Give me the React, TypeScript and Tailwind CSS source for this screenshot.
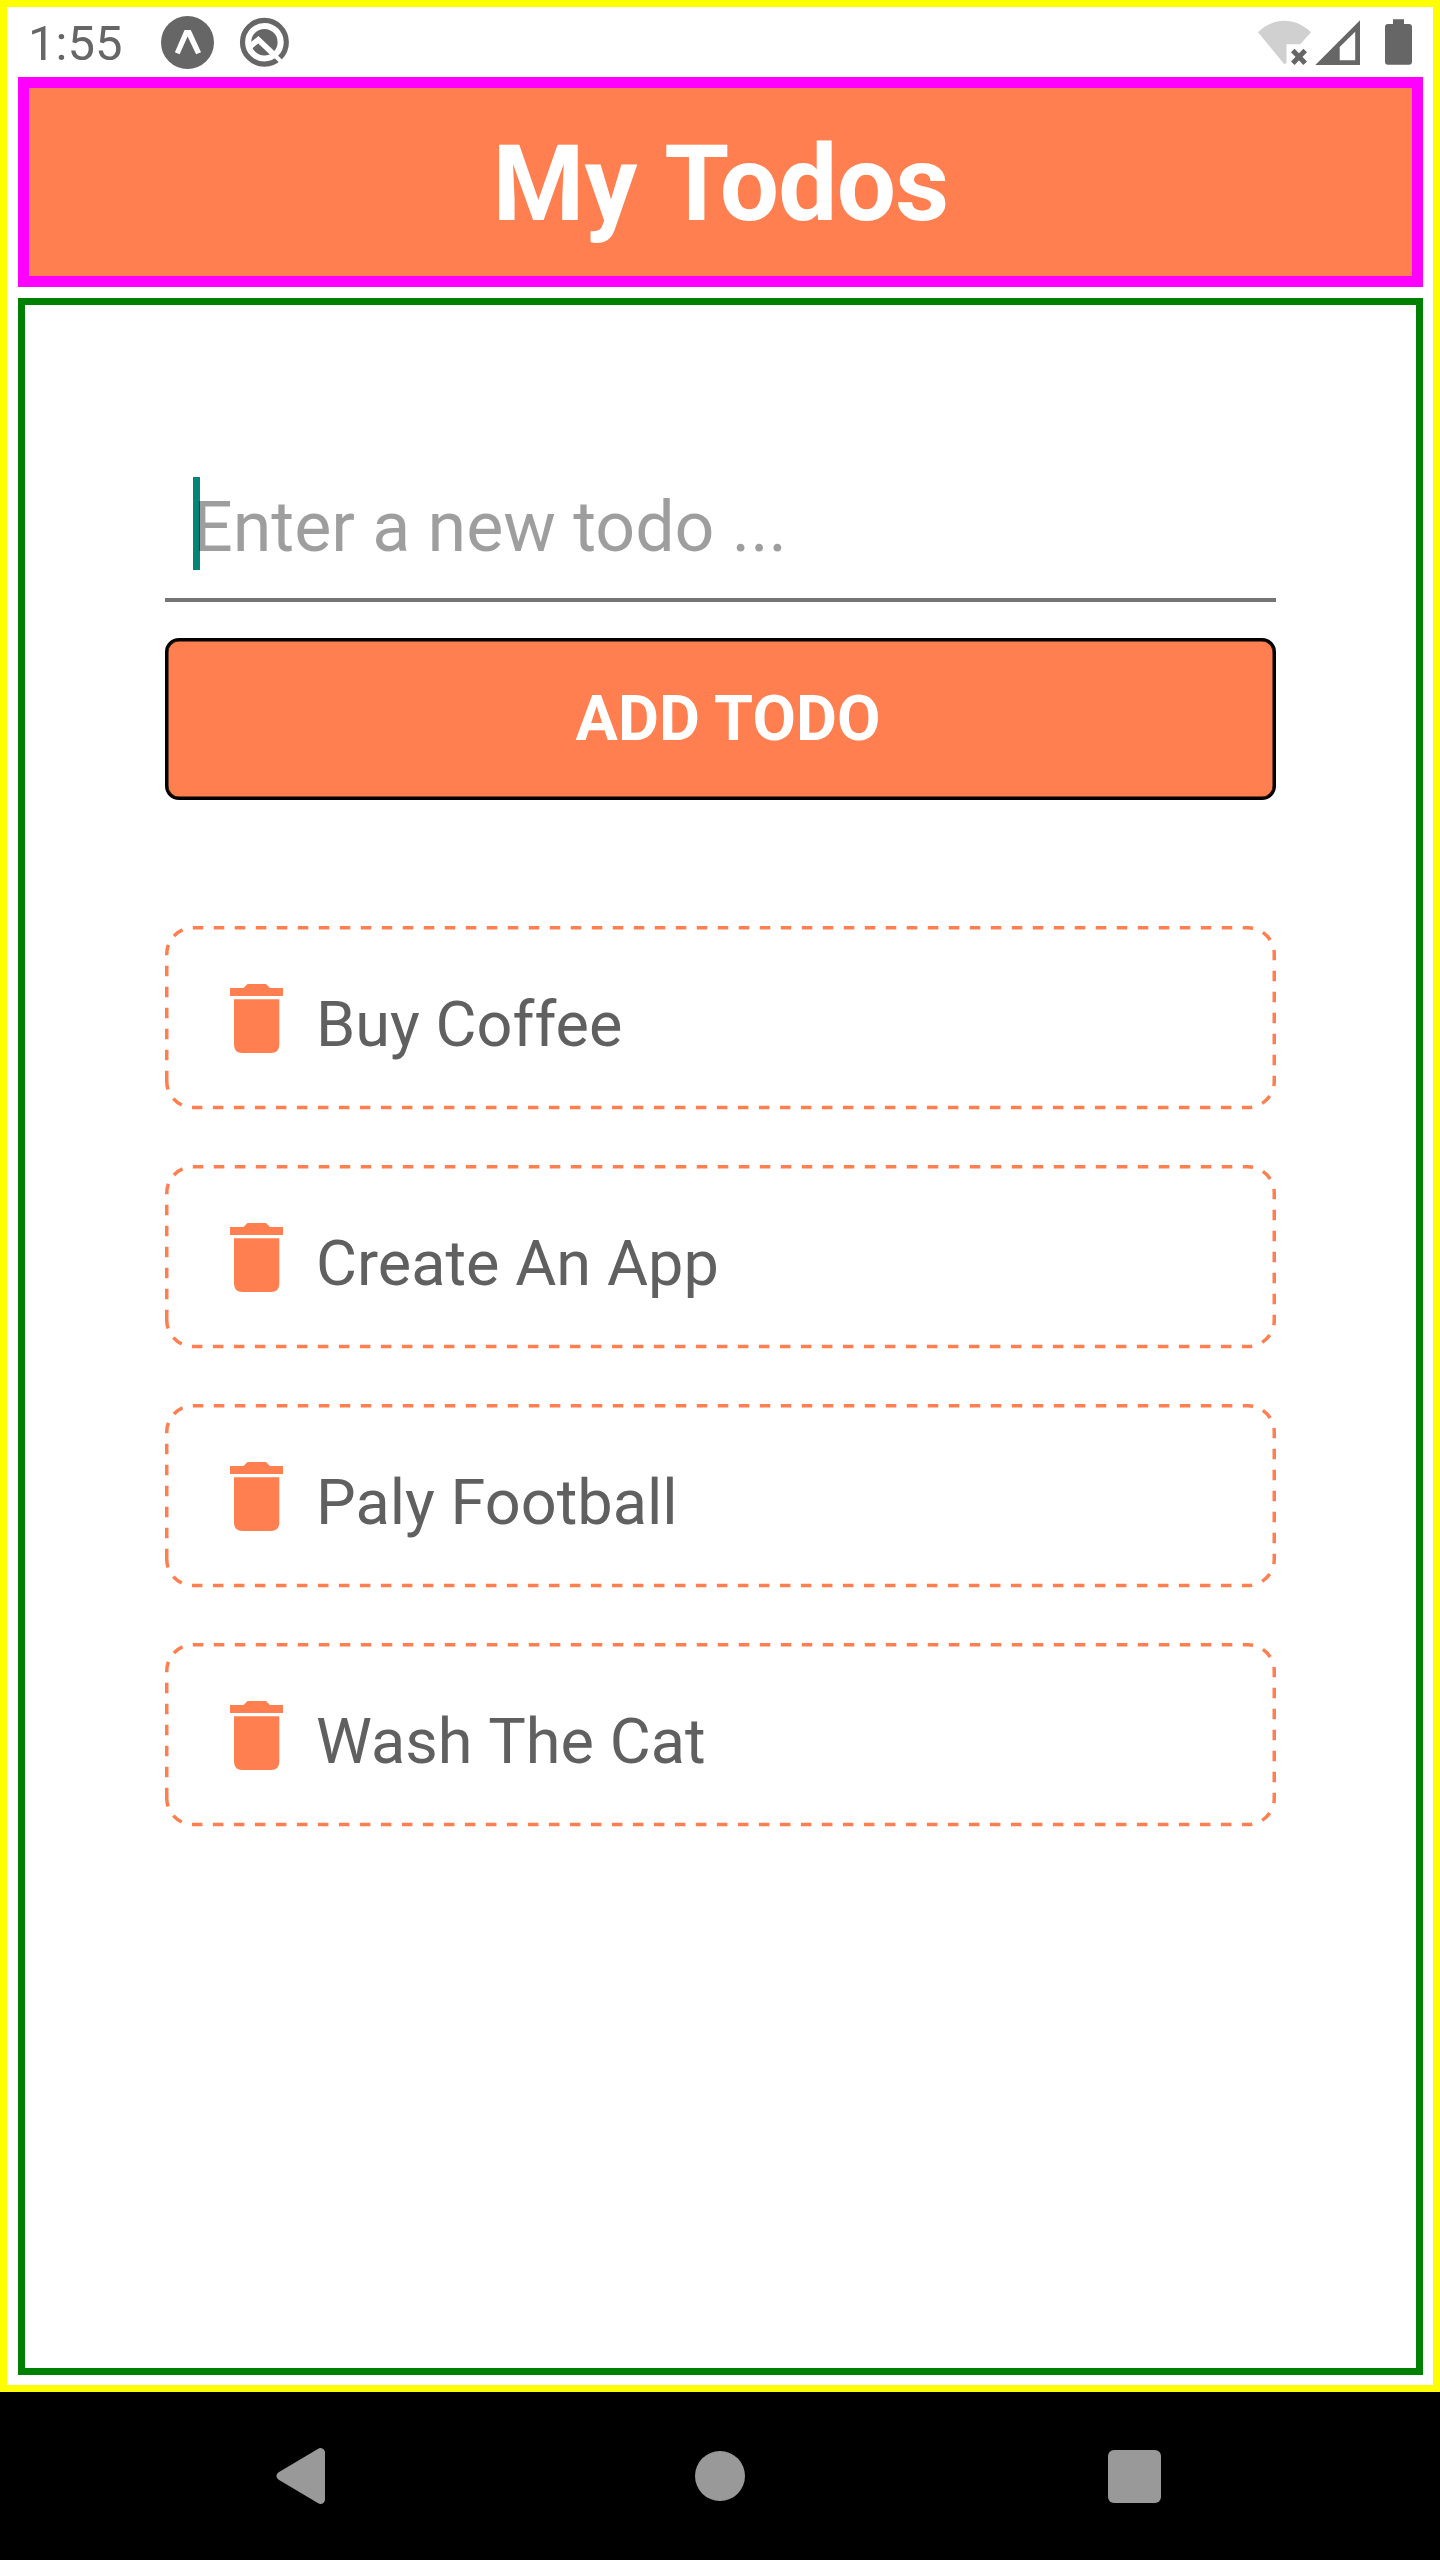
import React from "react";

const todos = ["Buy Coffee", "Create An App", "Paly Football", "Wash The Cat"];

function ExpoIcon() {
  return (
    <svg className="ml-[39px] h-[54px] w-[54px] shrink-0" viewBox="160 15 54 54">
      <circle cx="187.5" cy="42.5" r="26.5" fill="#666" />
      <path d="M184.5 30H190.8L201 52.3L196.1 54.3L187.6 36.4L179.6 54.3L174.9 52.3Z" fill="#fff" />
    </svg>
  );
}

function SearchStatusIcon() {
  return (
    <svg className="ml-[25px] h-[52px] w-[52px] shrink-0" viewBox="239 16 52 52">
      <circle cx="264.4" cy="42.2" r="21.9" fill="none" stroke="#666" strokeWidth="5.2" />
      <circle cx="264.4" cy="42.2" r="13.2" fill="#666" />
      <path d="M250 46.500L258.300 39.800L276 56.500" fill="none" stroke="#fff" strokeWidth="5.600" />
      <path d="M274 54.500L284 64.500" fill="none" stroke="#fff" strokeWidth="4" />
    </svg>
  );
}

function WifiIcon() {
  return (
    <svg className="h-[46px] w-[54px]" viewBox="1258 18 54 46">
      <path d="M1258 31.2C1273.500 16 1295 16 1311 31.200L1300.300 43.300H1286.500V61.500L1284.500 63.500Z" fill="#d0d0d0" />
      <path d="M1292.800 49.600L1305.200 62.200M1305.200 49.600L1292.800 62.200" stroke="#666" strokeWidth="5" />
    </svg>
  );
}

function SignalIcon() {
  return (
    <svg className="ml-[3px] h-[46px] w-[46px]" viewBox="1315 18 46 46">
      <path d="M1315.300 64L1360 19.300V64ZM1339.700 59.200H1355.200V30.700L1339.700 46Z" fill="#666" fillRule="evenodd" />
    </svg>
  );
}

function BatteryIcon() {
  return (
    <svg className="ml-6 h-[46px] w-[27px]" viewBox="1385 19 27 46">
      <path d="M1393 19.300H1404V24H1409Q1412 24 1412 27V61.500Q1412 64.700 1409 64.700H1388Q1385 64.700 1385 61.500V27Q1385 24 1388 24H1393Z" fill="#666" />
    </svg>
  );
}

function TrashIcon() {
  return (
    <svg className="mt-[58px] ml-[65px] h-[70px] w-[53px] shrink-0" viewBox="0 0 53 70" fill="#ff7f50">
      <path d="M0 4H13.500L17.500 0H36L40 4H53V12H0Z" />
      <path d="M4 15.300H49.300V60.500Q49.300 69 41 69H12.300Q4 69 4 60.500Z" />
    </svg>
  );
}

function TodoItem({ label }: { label: string }) {
  return (
    <li className="relative flex h-[184px] w-full">
      <svg className="absolute inset-0 h-[184px] w-[1111px]" viewBox="0 0 1111 184" fill="none">
        <path
          d="M1.750 155.250V28A26.250 26.250 0 0 1 28 1.750H1083A26.250 26.250 0 0 1 1109.250 28V155.250A26.250 26.250 0 0 1 1083 181.500H28A26.250 26.250 0 0 1 1.750 155.250Z"
          stroke="#ff7f50"
          strokeWidth="3.500"
          strokeDasharray="10.500 10.500"
        />
      </svg>
      <TrashIcon />
      <span className="mt-[62px] ml-[33px] flex gap-[15.800px] text-[63px] leading-[74px] whitespace-nowrap text-[#606060]">
        {label.split(" ").map((word) => (
          <span key={word}>{word}</span>
        ))}
      </span>
    </li>
  );
}

export default function App() {
  return (
    <div className="flex h-[2560px] w-[1440px] flex-col overflow-hidden bg-black font-['Roboto',sans-serif]">
      <div className="flex h-[2392px] flex-col border-7 border-[#ffff00] bg-white px-[11px] pb-[10px]">
        <div className="flex h-[70px] shrink-0 items-center justify-between pr-[10px] pl-[10px]">
          <div className="flex items-center">
            <span className="mt-[3px] w-[93px] text-[49px] leading-[58px] whitespace-nowrap text-[#666]">1:55</span>
            <ExpoIcon />
            <SearchStatusIcon />
          </div>
          <div className="flex items-center">
            <WifiIcon />
            <SignalIcon />
            <BatteryIcon />
          </div>
        </div>

        <header className="flex h-[210px] w-[1405px] shrink-0 items-center justify-center border-11 border-[#ff00ff] bg-[#ff7f50]">
          <h1 className="mt-[5px] flex gap-[27px] text-[105px] leading-[124px] font-bold text-white">
            <span>My</span>
            <span className="tracking-[-0.7px]">Todos</span>
          </h1>
        </header>

        <main className="mt-[11px] flex w-[1405px] flex-1 flex-col border-7 border-[#008000] px-[140px] pt-[140px]">
          <div className="flex h-[157px] items-start border-b-4 border-[#757575] pt-[32px] pl-7">
            <div className="relative flex h-[93px] items-center">
              <span className="absolute top-0 left-0 h-[93px] w-[7px] bg-[#008577]" />
              <span className="relative mt-[6px] text-[70px] leading-[82px] tracking-[-0.05px] whitespace-nowrap text-black/38">
                Enter a new todo ...
              </span>
            </div>
          </div>
          <button className="mt-9 flex h-[162px] w-full shrink-0 items-center justify-center rounded-[14px] border-3 border-black bg-[#ff7f50] pl-[15px] text-[63px] leading-[74px] font-bold tracking-[0.1px] text-white shadow-[inset_0_0_0_0.5px_#000]">
            ADD TODO
          </button>
          <ul className="mt-[126px] flex flex-col gap-[55px]">
            {todos.map((t) => (
              <TodoItem key={t} label={t} />
            ))}
          </ul>
        </main>
      </div>

      <nav className="flex h-[168px] items-center pl-[276px]">
        <svg className="h-[56px] w-[49px]" viewBox="0 0 49 56">
          <path d="M5 28L44.500 4.500V51.500Z" fill="#999" stroke="#999" strokeWidth="9" strokeLinejoin="round" />
        </svg>
        <div className="ml-[370px] h-[50px] w-[50px] rounded-full bg-[#999]" />
        <div className="ml-[363px] h-[53px] w-[53px] rounded-md bg-[#999]" />
      </nav>
    </div>
  );
}
